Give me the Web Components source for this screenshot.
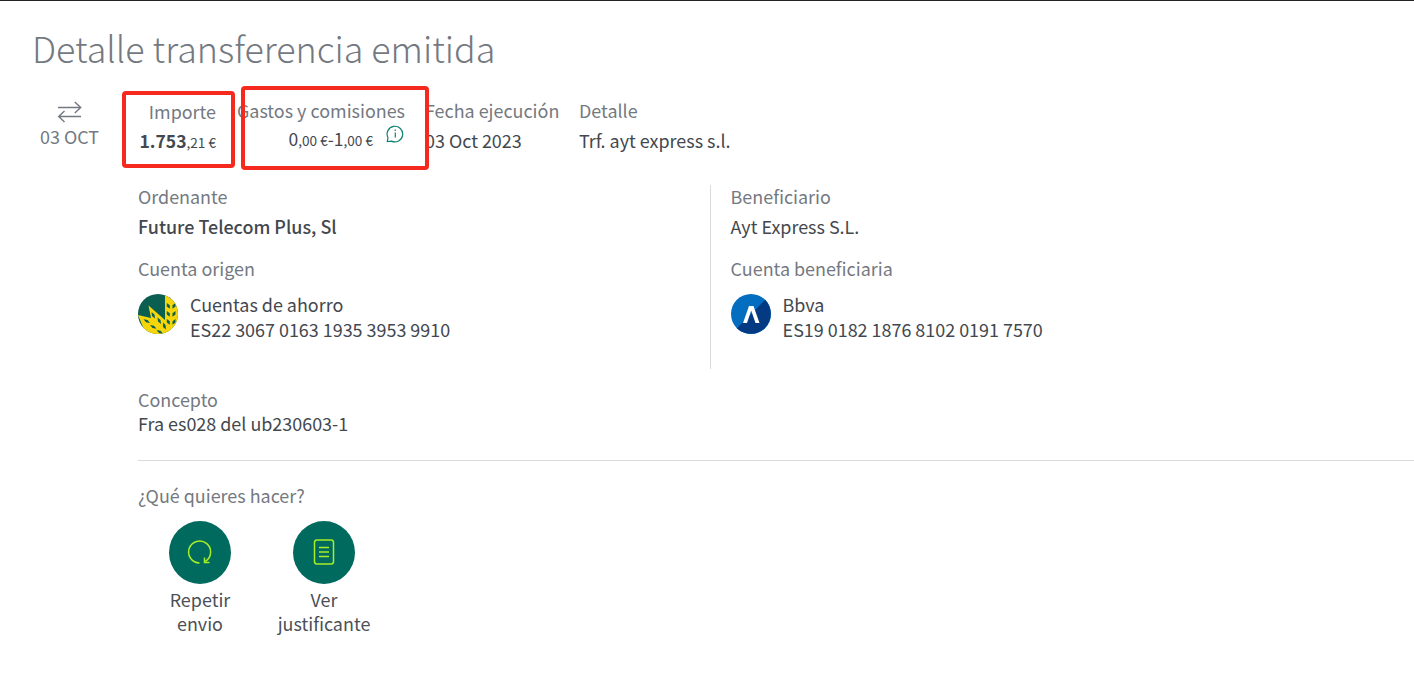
<!DOCTYPE html>
<html lang="es"><head><meta charset="utf-8"><title>Detalle transferencia emitida</title>
<style>html,body{margin:0;background:#fff;overflow:hidden}</style></head>
<body><transfer-detail></transfer-detail>
<script>
const define = (name, html) => {
  const t = document.createElement('template');
  t.innerHTML = html;
  customElements.define(name, class extends HTMLElement {
    constructor() {
      super();
      this.attachShadow({mode: 'open'}).append(t.content.cloneNode(true));
    }
  });
};

define('data-field', `<style>
:host{display:flex;flex-direction:column;gap:var(--gap,6px);white-space:nowrap}
.l{color:#747981}
</style><div class="l"><slot name="label"></slot></div><div><slot></slot></div>`);

define('mark-box', `<style>
:host{position:absolute;box-sizing:border-box;border:4px solid #f5291d;border-radius:4px}
</style>`);

define('icon-arrows', `<style>:host{display:block;height:24px}svg{display:block}</style>
<svg width="26" height="24" viewBox="0 0 26 24" fill="none" stroke="#747981" stroke-width="1.4">
<path d="M1 8.500H23.5M17.800 3L23.7 8.500L17.800 14M24 17.500H1.5M7.500 12L1.700 17.500L7.500 23"/></svg>`);

define('icon-info', `<style>:host{display:block}svg{display:block}</style>
<svg width="18" height="18" viewBox="0 0 18 18" fill="none" stroke="#12806f" stroke-width="1.2">
<path d="M1.300 16.500L2 12.700A7.800 7.800 0 1 1 5.500 16.100Z"/><path d="M9.300 7.500V12.500M9.300 4.500V6"/></svg>`);

define('icon-close', `<style>:host{display:block}svg{display:block}</style>
<svg width="24" height="24" viewBox="0 0 24 24" fill="none" stroke="#12695f" stroke-width="1.6"><path d="M1 1L23 23M23 1L1 23"/></svg>`);

define('logo-wheat', `<style>:host{display:block;width:40px;height:40px}svg{display:block}</style>
<svg width="40" height="40" viewBox="0 0 40 40"><defs><clipPath id="c"><circle cx="20" cy="20" r="20"/></clipPath></defs>
<g clip-path="url(#c)"><path fill="#0b5f50" d="M0 0H40V40H0z"/>
<path fill="#f6d60b" d="M27 0L33 5L40 0V28L30 40H8L0 21L13 24L10.500 11.500L27 26z"/>
<g fill="#0b5f50"><path d="M28.800 9l3 2.200v3.500l-3-2.200zM37.500 9l-3 2.200v3.500l3-2.200zM28.800 17l3 2.200v3.500l-3-2.200zM37.500 17l-3 2.200v3.500l3-2.200zM28.800 25l3 2.200v3.500l-3-2.200zM37.500 25l-3 2.200v3.500l3-2.200z"/>
<path d="M13.500 18l3 2.500.5 4-3-2.500zM19.500 23.500l3 2.500.5 4-3-2.500zM5.500 25.300l4 .7 2.500 3-4-.7zM12 31l4 .7 2.500 3-4-.7zM18.500 36l4 .7 2.500 3-4-.7zM25 28.500l2.500 2.500.5 4.500-3-2.500z"/></g></g></svg>`);

define('logo-bbva', `<style>:host{display:block;width:40px;height:40px}svg{display:block}</style>
<svg width="40" height="40" viewBox="0 0 40 40"><circle cx="20" cy="20" r="20" fill="#036dc0"/>
<path d="M34.140 5.860A20 20 0 0 1 5.860 34.140Z" fill="#043a82"/>
<path d="M12 29L18 12H22.500L28.500 29H24.500L20.200 16.500L16 29Z" fill="#fff"/></svg>`);

define('account-row', `<style>
:host{display:flex;gap:12px;white-space:nowrap}
.logo{padding-top:2px}.t{line-height:25px}
</style><div class="logo"><slot name="logo"></slot></div><div class="t"><slot></slot></div>`);

define('action-button', `<style>
:host{display:flex;flex-direction:column;align-items:center;width:124px;text-align:center;color:#4b5058}
.c{box-sizing:border-box;width:62px;height:63px;padding-bottom:2px;border-radius:50%;background:#006a5e;display:flex;align-items:center;justify-content:center;margin-bottom:3px}
</style><div class="c"><slot name="icon"></slot></div><div><slot></slot></div>`);

define('icon-repeat', `<style>:host{display:block}svg{display:block}</style>
<svg width="26" height="26" viewBox="0 0 26 26" fill="none" stroke="#a4ee25" stroke-width="1.5">
<path d="M12.500 24A11 11 0 1 1 18.500 22.300M17.500 18.500V23.500H22.500"/></svg>`);

define('icon-doc', `<style>:host{display:block}svg{display:block}</style>
<svg width="22" height="26" viewBox="0 0 22 26" fill="none" stroke="#a4ee25" stroke-width="1.5">
<rect x="1.500" y="1" width="19" height="24" rx="2.500"/><path d="M6 8.500H16M6 13H16M6 17.500H16"/></svg>`);

define('transfer-detail', `<style>
:host{display:block;position:relative;box-sizing:border-box;width:1414px;height:694px;overflow:hidden;border-top:1px solid #222527;background:#fff;
 font:400 17.930px/24px "Noto Sans CJK SC","Noto Sans",sans-serif;color:#43484f}
header{display:flex;justify-content:space-between;height:64px;padding:19px 0 0 32px;width:1390px}
h1{margin:0;font-weight:300;font-size:35.850px;line-height:54px;color:#747981;white-space:nowrap}
header icon-close{margin:14px -32px 0 0}
.sum{display:grid;grid-template-columns:75px 109px 189px 154px auto;padding-left:32px;height:73px;padding-top:14px}
.date{display:flex;flex-direction:column;align-items:center;color:#747981;padding-top:1px;gap:1px;white-space:nowrap}
.r{text-align:right;justify-self:end}
.imp{padding-top:1px}
.f{padding-left:20px}
small{font-size:13.600px}
b{font-weight:700}
.imp b{font-size:17.500px}
.fee{display:flex;justify-content:flex-end;gap:13px;margin-top:-1px;font-size:17.500px}
.fee icon-info{margin:-2px 1px 0 0}
.body{padding-left:138px}
.cols{display:grid;grid-template-columns:572px 1fr;height:184px;margin-top:14px}
.cols section{display:flex;flex-direction:column;gap:18px;margin-top:-1px}
.cols section account-row{margin-top:6px}
.cols section:last-child{border-left:1px solid #d9dbdd;padding-left:19.600px;margin-top:0;}
.cols section:last-child data-field:first-child{margin-top:-1px}
.con{--gap:0px;padding:18px 0 25px;border-bottom:1px solid #d9dbdd}
.q{color:#747981;margin-top:22px}
.acts{display:flex;margin-top:14px}
</style>
<header><h1>Detalle transferencia emitida</h1><icon-close></icon-close></header>
<div class="sum">
<div class="date"><icon-arrows></icon-arrows><span>03 OCT</span></div>
<data-field class="r imp" style="--gap:5px"><span slot="label">Importe</span><b>1.753</b><small>,21 €</small></data-field>
<data-field class="r"><span slot="label">Gastos y comisiones</span><div class="fee"><span>0<small>,00 €</small>-1<small>,00 €</small></span><icon-info></icon-info></div></data-field>
<data-field class="f"><span slot="label">Fecha ejecución</span>03 Oct 2023</data-field>
<data-field class="f"><span slot="label">Detalle</span>Trf. ayt express s.l.</data-field>
</div>
<mark-box style="left:122px;top:90px;width:113px;height:77px"></mark-box>
<mark-box style="left:241px;top:85px;width:188px;height:84px"></mark-box>
<div class="body">
<div class="cols">
<section><data-field><span slot="label">Ordenante</span><b style="font-weight:500">Future Telecom Plus, Sl</b></data-field>
<data-field><span slot="label">Cuenta origen</span><account-row><logo-wheat slot="logo"></logo-wheat>Cuentas de ahorro<br>ES22 3067 0163 1935 3953 9910</account-row></data-field></section>
<section><data-field><span slot="label">Beneficiario</span>Ayt Express S.L.</data-field>
<data-field><span slot="label">Cuenta beneficiaria</span><account-row><logo-bbva slot="logo"></logo-bbva>Bbva<br>ES19 0182 1876 8102 0191 7570</account-row></data-field></section>
</div>
<data-field class="con"><span slot="label">Concepto</span>Fra es028 del ub230603-1</data-field>
<div class="q">¿Qué quieres hacer?</div>
<div class="acts"><action-button><icon-repeat slot="icon"></icon-repeat>Repetir<br>envio</action-button><action-button><icon-doc slot="icon"></icon-doc>Ver<br>justificante</action-button></div>
</div>`);
</script></body></html>
